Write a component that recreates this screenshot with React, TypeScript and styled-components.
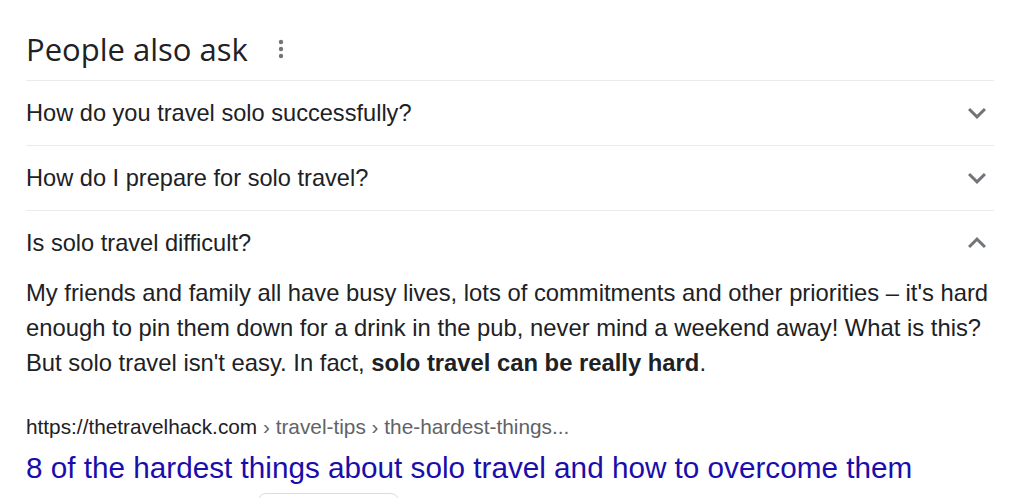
import React from "react";
import styled, { createGlobalStyle } from "styled-components";

const Global = createGlobalStyle`
  html, body { margin: 0; padding: 0; background: #ffffff; }
  body { font-family: "Liberation Sans", Arial, sans-serif; color: #202124; }
`;

const Page = styled.div`
  width: 968px;
  padding-left: 26px;
  overflow: hidden;
  height: 498px;
`;

const Header = styled.div`
  display: flex;
  align-items: center;
  gap: 29px;
  padding: 31px 0 13px;
  border-bottom: 1px solid #ebebeb;
`;

const Heading = styled.h2`
  margin: 0;
  font-family: "Open Sans", "Liberation Sans", sans-serif;
  font-weight: 400;
  font-size: 31px;
  line-height: 36px;
  color: #202124;
`;

const Question = styled.div<{ $open?: boolean }>`
  display: flex;
  align-items: center;
  justify-content: space-between;
  height: 64px;
  border-bottom: ${(p) => (p.$open ? "none" : "1px solid #ebebeb")};
  font-size: 23.6px;
  color: #202124;
`;

const Chevron = styled.svg`
  width: 36px;
  height: 36px;
  margin-right: -1px;
  fill: #70757a;
  flex: none;
`;

const Answer = styled.p`
  margin: 0;
  font-size: 23.8px;
  line-height: 35px;
  color: #202124;
  b { font-weight: 700; }
`;

const Cite = styled.div`
  margin-top: 33px;
  font-size: 20.8px;
  line-height: 28px;
  color: #202124;
`;

const Crumbs = styled.span`
  color: #5f6368;
`;

const Title = styled.a`
  display: block;
  margin-top: 8px;
  font-size: 29.7px;
  line-height: 38px;
  color: #1a0dab;
  text-decoration: none;
`;

const Chip = styled.div`
  margin: 6px 0 0 232px;
  width: 139px;
  height: 40px;
  border: 1px solid #dadce0;
  border-radius: 8px;
`;

const Kebab = () => (
  <svg width="8" height="24" viewBox="0 0 8 24" aria-hidden>
    <circle cx="4" cy="5" r="2.2" fill="#70757a" />
    <circle cx="4" cy="12" r="2.2" fill="#70757a" />
    <circle cx="4" cy="19" r="2.2" fill="#70757a" />
  </svg>
);

const Down = () => (
  <Chevron viewBox="0 0 24 24" aria-hidden>
    <path d="M7.41 8.59L12 13.17l4.59-4.58L18 10l-6 6-6-6 1.41-1.41z" />
  </Chevron>
);

const Up = () => (
  <Chevron viewBox="0 0 24 24" aria-hidden>
    <path d="M12 8l-6 6 1.41 1.41L12 10.83l4.59 4.58L18 14z" />
  </Chevron>
);

export default function App() {
  return (
    <>
      <Global />
      <Page>
        <Header>
          <Heading>People also ask</Heading>
          <Kebab />
        </Header>
        <Question>
          <span>How do you travel solo successfully?</span>
          <Down />
        </Question>
        <Question>
          <span>How do I prepare for solo travel?</span>
          <Down />
        </Question>
        <Question $open>
          <span>Is solo travel difficult?</span>
          <Up />
        </Question>
        <Answer>
          My friends and family all have busy lives, lots of commitments and other priorities – it's hard
          enough to pin them down for a drink in the pub, never mind a weekend away! What is this? But
          solo travel isn't easy. In fact, <b>solo travel can be really hard</b>.
        </Answer>
        <Cite>
          https://thetravelhack.com<Crumbs> › travel-tips › the-hardest-things...</Crumbs>
        </Cite>
        <Title href="#">8 of the hardest things about solo travel and how to overcome them</Title>
        <Chip />
      </Page>
    </>
  );
}
